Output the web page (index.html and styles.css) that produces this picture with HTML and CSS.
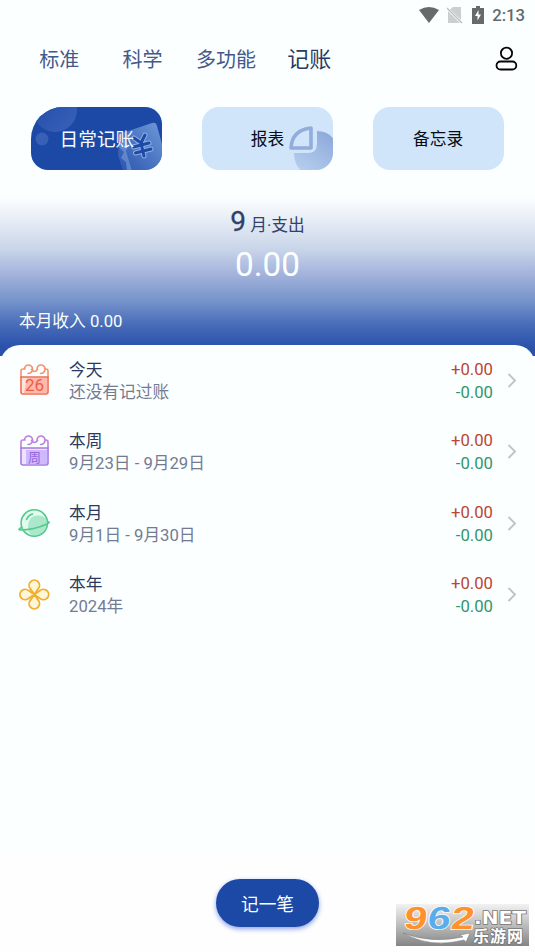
FILE: index.html
```html
<!DOCTYPE html>
<html lang="zh-CN">
<head>
<meta charset="utf-8">
<meta name="viewport" content="width=device-width, initial-scale=1">
<title>记账</title>
<link rel="stylesheet" href="styles.css">
</head>
<body>
<div class="screen">
  <header class="status">
    <svg width="22" height="18" viewBox="0 0 22 18"><path d="M1 4Q11-2 21 4L11 17Z" fill="#666a6a"/></svg>
    <svg width="16" height="18" viewBox="0 0 16 18"><path d="M6 1h8v13L3 3.500zM1 5l12 12H1z" fill="#cbcfcf"/><path d="M0 2l15 15" stroke="#b9bdbd" stroke-width="1.300"/></svg>
    <svg width="12" height="18" viewBox="0 0 12 18"><path d="M4 0h4v2h4v16H0V2h4z" fill="#666a6a"/><path d="M6.500 4L3 10h2.500v4.500L9 8.500H6.500z" fill="#fbffff"/></svg>
    <span class="clock">2:13</span>
  </header>
  <nav class="nav">
    <div class="tabs">
      <a class="tab">标准</a><a class="tab">科学</a><a class="tab">多功能</a><a class="tab tab-active">记账</a>
    </div>
    <svg class="user" width="24" height="28" viewBox="0 0 24 28" fill="none" stroke="#050505" stroke-width="1.800"><circle cx="12.500" cy="7.200" r="5.600"/><rect x="2.500" y="15.500" width="19.800" height="8" rx="4"/></svg>
  </nav>
  <div class="modes">
    <button class="mode mode-main">
      <svg class="art" width="131" height="64" viewBox="0 0 131 64">
        <defs>
          <linearGradient id="note" x1="0" y1="1" x2="1" y2="0"><stop offset="0" stop-color="#7098d8" stop-opacity=".15"/><stop offset="1" stop-color="#6e98d6"/></linearGradient>
          <linearGradient id="bub" x1="0" y1="0" x2="1" y2="1"><stop offset="0" stop-color="#1c48a6"/><stop offset="1" stop-color="#3b63b9"/></linearGradient>
        </defs>
        <circle cx="24" cy="3" r="22" fill="url(#bub)"/><circle cx="11" cy="32" r="6.500" fill="#3860b5"/>
        <path d="M88 34q-2-6 3-8l30-10q4-1 5 3l5 18v27H92l-5-16z" fill="url(#note)"/>
        <path d="M88 40l5 5-3 6 5 4 1 9h5l-6-20 3-6-5-6z" fill="#7fa3df" opacity=".55"/>
        <g fill="none" stroke-linecap="round" transform="translate(-1 -2)">
          <path d="M104 33l7 5 4-8M111 38l3 13M103.500 42l15.500-4M105.500 48l15.500-4" stroke="#8fb1e4" stroke-width="5"/>
          <path d="M104 33l7 5 4-8M111 38l3 13M103.500 42l15.500-4M105.500 48l15.500-4" stroke="#1e4ba8" stroke-width="3"/>
        </g>
      </svg>
      <span>日常记账</span>
    </button>
    <button class="mode">
      <svg class="art" width="131" height="64" viewBox="0 0 131 64">
        <defs><linearGradient id="pie" x1="0" y1="1" x2=".7" y2="0"><stop offset="0" stop-color="#b9d1ef"/><stop offset="1" stop-color="#8fabdc"/></linearGradient></defs>
        <path d="M92 46h14q9 0 9-9V24q12 0 18 10v30H99q-7-7-7-18z" fill="url(#pie)"/>
        <path d="M109 21v20H89q1-18 20-20z" fill="none" stroke="#92acdc" stroke-width="3.600" stroke-linejoin="round"/>
      </svg>
      <span>报表</span>
    </button>
    <button class="mode"><span>备忘录</span></button>
  </div>
  <section class="summary">
    <div class="month"><b>9</b> 月·支出</div>
    <div class="total">0.00</div>
    <div class="income">本月收入 0.00</div>
  </section>
  <main class="list">
    <div class="row">
      <svg class="icon" width="32" height="34" viewBox="0 0 32 34">
        <path d="M4 13h25v16H4z" fill="#ffe3dc"/><path d="M9 14h20v15H6z" fill="#ffb8aa"/>
        <g fill="none" stroke-width="1.600" stroke-linecap="round"><path d="M3 13V7q0-2 2-2h2M13.500 5.500q3 4 6 0M26.500 5H28q2 0 2 2v6M6.500 5c0-6 9-5 8 1q-1 3.500-4.500 3.500M19 5c0-6 9-5 8 1q-1 3.500-4.500 3.500" stroke="#f4936d"/><path d="M3 13h27v15q0 2-2 2H5q-2 0-2-2z" stroke="#ed6d55"/></g>
        <text x="16.500" y="26.500" class="day">26</text>
      </svg>
      <div class="info"><div class="name">今天</div><div class="desc">还没有记过账</div></div>
      <div class="sums"><div class="plus">+0.00</div><div class="minus">-0.00</div></div>
      <svg class="arrow" width="10" height="16" viewBox="0 0 10 16"><path d="M1.500 1L8 7.500l-6.500 6.500"/></svg>
    </div>
    <div class="row">
      <svg class="icon" width="32" height="34" viewBox="0 0 32 34">
        <path d="M4 13h25v16H4z" fill="#eee3ff"/><path d="M8 15h21v14H8z" fill="#cdb9fb"/>
        <g fill="none" stroke-width="1.600" stroke-linecap="round"><path d="M3 13V7q0-2 2-2h2M13.500 5.500q3 4 6 0M26.500 5H28q2 0 2 2v6M6.500 5c0-6 9-5 8 1q-1 3.500-4.500 3.500M19 5c0-6 9-5 8 1q-1 3.500-4.500 3.500" stroke="#bd82df"/><path d="M3 13h27v15q0 2-2 2H5q-2 0-2-2z" stroke="#a679e2"/></g>
        <text x="16.500" y="26.500" class="week">周</text>
      </svg>
      <div class="info"><div class="name">本周</div><div class="desc">9月23日 - 9月29日</div></div>
      <div class="sums"><div class="plus">+0.00</div><div class="minus">-0.00</div></div>
      <svg class="arrow" width="10" height="16" viewBox="0 0 10 16"><path d="M1.500 1L8 7.500l-6.500 6.500"/></svg>
    </div>
    <div class="row">
      <svg class="icon" width="32" height="34" viewBox="0 0 32 34">
        <circle cx="16.300" cy="16" r="13" fill="#e3fbef"/><path d="M10 20.500q0-12 10-12 5 0 8 3 2 8-3 13-4 5-11 4-4-3-4-8z" fill="#abe8cb"/>
        <g fill="none" stroke="#55c88b" stroke-width="1.600" stroke-linecap="round"><circle cx="16.300" cy="16" r="13.200"/><path d="M8.500 12.500q2-4.500 6-5.500"/><path d="M3.500 20.500q-4 2-1.500 2.500 14 0 27-6 4-2 .5-2.500"/></g>
      </svg>
      <div class="info"><div class="name">本月</div><div class="desc">9月1日 - 9月30日</div></div>
      <div class="sums"><div class="plus">+0.00</div><div class="minus">-0.00</div></div>
      <svg class="arrow" width="10" height="16" viewBox="0 0 10 16"><path d="M1.500 1L8 7.500l-6.500 6.500"/></svg>
    </div>
    <div class="row">
      <svg class="icon" width="32" height="34" viewBox="0 0 32 34">
        <g transform="translate(16.300 16.500)" fill="#fff6d8" stroke="#f4ad28" stroke-width="1.800" stroke-linejoin="round">
          <path d="M0 0L-3.900-5.700a5.200 5.200 0 1 1 7.800 0z"/>
          <path d="M0 0L-3.900-5.700a5.200 5.200 0 1 1 7.800 0z" transform="rotate(90)"/>
          <path d="M0 0L-3.900-5.700a5.200 5.200 0 1 1 7.800 0z" transform="rotate(180)"/>
          <path d="M0 0L-3.900-5.700a5.200 5.200 0 1 1 7.800 0z" transform="rotate(270)"/>
        </g>
      </svg>
      <div class="info"><div class="name">本年</div><div class="desc">2024年</div></div>
      <div class="sums"><div class="plus">+0.00</div><div class="minus">-0.00</div></div>
      <svg class="arrow" width="10" height="16" viewBox="0 0 10 16"><path d="M1.500 1L8 7.500l-6.500 6.500"/></svg>
    </div>
  </main>
  <footer class="footer"><button class="add">记一笔</button></footer>
  <svg class="badge" width="133" height="42" viewBox="0 0 133 42">
    <defs><linearGradient id="bg" x1="0" y1="0" x2="0" y2="1"><stop offset="0" stop-color="#f2f2f2"/><stop offset=".5" stop-color="#bdbdbd"/><stop offset="1" stop-color="#858585"/></linearGradient></defs>
    <rect width="133" height="42" fill="url(#bg)"/>
    <g class="digits" transform="translate(7 25) skewX(-8)"><text x="0" y="0" textLength="23" lengthAdjust="spacingAndGlyphs" fill="#ff922d">9</text><text x="23.500" y="0" textLength="23" lengthAdjust="spacingAndGlyphs" fill="#5badea">6</text><text x="47" y="0" textLength="23" lengthAdjust="spacingAndGlyphs" fill="#ff922d">2</text></g>
    <path d="M7 29q28 11 60 4l-3-2 10-2-4 9-2-2Q35 45 7 29z" fill="#fff" stroke="#777" stroke-width=".5"/>
    <text x="78" y="19.500" class="net" textLength="52" lengthAdjust="spacingAndGlyphs">.NET</text>
    <text x="77" y="37.500" class="site" textLength="50">乐游网</text>
  </svg>
</div>
</body>
</html>
```
FILE: styles.css
```css
* { box-sizing: border-box; }
body { margin: 0; font-family: Roboto, "Noto Sans CJK SC", sans-serif; background: #fbffff; }
svg { display: block; flex: none; }
button { border: 0; padding: 0; font: inherit; }

.screen { position: relative; width: 535px; height: 952px; display: flex; flex-direction: column; overflow: hidden; }

.status { height: 30px; padding: 1px 10px 0 0; display: flex; align-items: center; justify-content: flex-end; }
.status svg { margin-top: -2px; }
.status svg:nth-child(1) { margin-right: 7px; }
.status svg:nth-child(2) { margin-right: 9px; }
.clock { margin-left: 8px; font-size: 16.700px; font-weight: 500; line-height: 20px; color: #65696a; }

.nav { height: 58px; padding: 1px 17px 0 17.500px; display: flex; align-items: center; justify-content: space-between; }
.tabs { display: flex; }
.tab { width: 83.400px; text-align: center; font-size: 20px; line-height: 30px; color: #44598a; white-space: nowrap; }
.tab-active { font-size: 22px; color: #293b62; }

.modes { height: 104px; padding: 19px 31.400px 0; display: flex; align-items: flex-start; justify-content: space-between; }
.mode { position: relative; width: 131px; height: 63px; border-radius: 17px; overflow: hidden; background: #d0e5f9; color: #080b12; font-size: 16.700px; }
.mode-main { border-top-left-radius: 32px; background: #1c48a6; color: #f5fcff; font-size: 18.700px; }
.mode span { position: relative; top: -1px; }
.art { position: absolute; left: 0; top: 0; }

.summary { height: 164px; display: flex; flex-direction: column; align-items: center; background: linear-gradient(#fbffff 0%, #fafdfe 5%, #dfe6f2 22%, #c8d5e9 35%, #a6b5dc 49%, #7794cb 66%, #486cb9 81%, #2b53ac 94%, #2750a9 100%); }
.month { margin-top: 12px; line-height: 36px; font-size: 16.700px; color: #30416b; }
.month b { font-size: 28px; font-weight: 400; -webkit-text-stroke: .3px; }
.total { margin-top: 1px; font-size: 33.300px; line-height: 40px; color: #fbffff; }
.income { align-self: flex-start; margin: 24px 0 0 19px; font-size: 16.700px; line-height: 26px; color: #fbffff; }

.list { margin-top: -11px; flex: 1; background: #fbffff; border-radius: 20px 20px 0 0; }
.row { height: 71.500px; padding: 0 18px; display: flex; align-items: center; }
.info { margin-left: 19px; flex: 1; }
.name, .desc { font-size: 16.700px; line-height: 23px; }
.name { position: relative; top: 1px; color: #2a3960; }
.desc { color: #747b91; }
.sums { margin-right: 14px; text-align: right; font-size: 16.700px; line-height: 23px; }
.plus { color: #bb452f; }
.minus { color: #32966b; }
.arrow path { fill: none; stroke: #bfc2c5; stroke-width: 1.800; }
.day { font-size: 17px; text-anchor: middle; fill: #e75f48; }
.week { font-size: 13px; text-anchor: middle; fill: #9467df; }

.footer { height: 96px; padding-top: 23px; display: flex; justify-content: center; align-items: flex-start; background: #fefefe; }
.add { width: 103px; height: 48px; border-radius: 24px; background: #1c48a6; color: #fbffff; font-size: 17.700px; box-shadow: 0 2px 5px #8ca0e6; }

.badge { position: absolute; left: 396px; top: 904px; overflow: visible; }
.digits { font-family: "Liberation Sans", sans-serif; font-size: 32px; font-weight: 700; stroke: #fff; stroke-width: 1.500; paint-order: stroke; }
.net { font-family: "DejaVu Sans", sans-serif; font-size: 17px; font-weight: 700; fill: #fff; stroke: #777; stroke-width: 1.500; paint-order: stroke; }
.site { font-size: 16px; font-weight: 700; fill: #fff; stroke: #777; stroke-width: 1.500; paint-order: stroke; }
```
